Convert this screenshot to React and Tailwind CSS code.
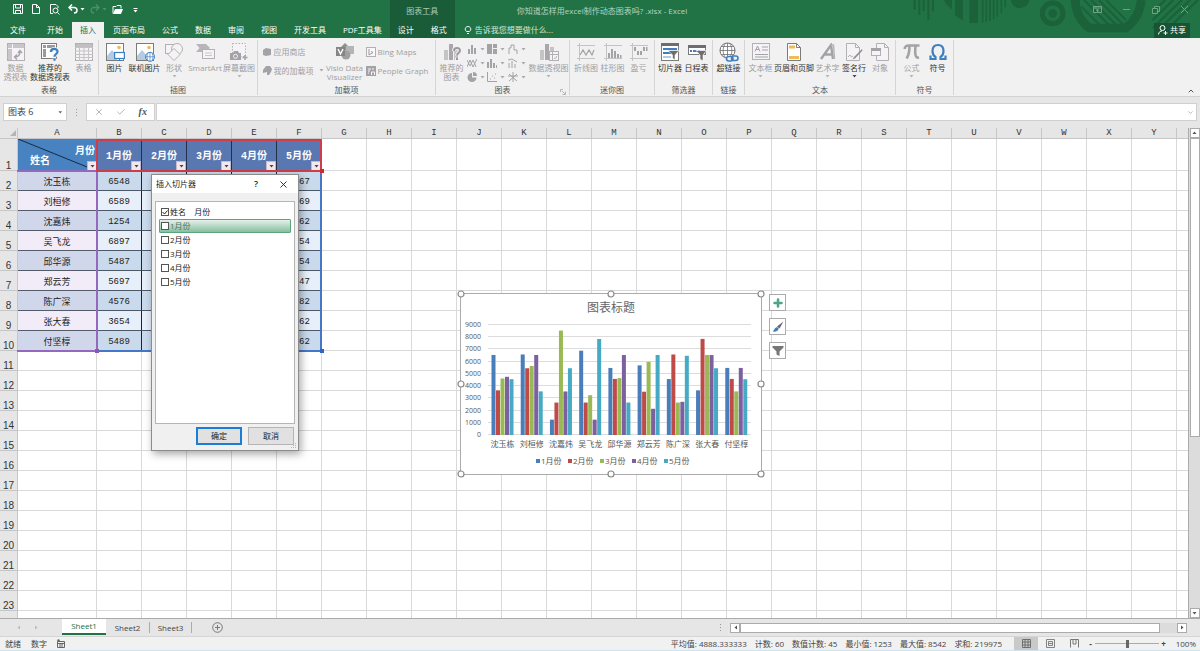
import { useState } from 'react';
import { Plus, X, Check, ChevronDown, ChevronUp } from 'lucide-react';

const months = ['1月份', '2月份', '3月份', '4月份', '5月份'];

const people = [
    { name: '沈玉栋', values: [6548, 3654, 4625, 4762, 4567] },
    { name: '刘桓修', values: [6589, 5462, 5647, 6547, 3569] },
    { name: '沈嘉炜', values: [1254, 2654, 8542, 3562, 5462] },
    { name: '吴飞龙', values: [6897, 2654, 3254, 1253, 7854] },
    { name: '邱华源', values: [5487, 4587, 4654, 6542, 2654] },
    { name: '郑云芳', values: [5697, 3541, 5987, 2145, 6547] },
    { name: '陈广深', values: [4576, 6587, 2654, 2715, 6482] },
    { name: '张大春', values: [3654, 7862, 6547, 6542, 5462] },
    { name: '付坚椁', values: [5489, 4587, 3568, 5487, 4562] },
];

const letters = 'ABCDEFGHIJKLMNOPQRSTUVWXY'.split('');
const seriesColors = ['#4a7ebb', '#be4b48', '#98b954', '#7d60a0', '#46aac5'];

const GREY = '#b3b0b4';
const DARK = '#6d6d6d';
const BLUE = '#3f7fbf';

function Icon({ children, size = 18, box = 18, ...rest }) {
    return (
        <svg width={size} height={size} viewBox={`0 0 ${box} ${box}`} fill="none" stroke={GREY} aria-hidden="true" {...rest}>
            {children}
        </svg>
    );
}

function Caret({ color = '#a8a8a8' }) {
    return (
        <svg width="5" height="3" viewBox="0 0 5 3" aria-hidden="true">
            <path d="M0.5 0h4L2.5 2.5z" fill={color} />
        </svg>
    );
}

const icons = {
    pivot: (
        <Icon>
            <rect x="0.5" y="0.5" width="17" height="17" fill="#f6f3f7" />
            <path d="M1 1h4v4H1zM6 1h11v4H6zM1 6h4v11H1z" fill="#c9c6ca" stroke="none" />
            <path d="M8 14c4 0 5-2 5-6M11 10l2-2.5 2 2.5M10 11.5L7.500 14l2.500 2.500" strokeWidth="1.400" stroke="#a5a2a7" />
        </Icon>
    ),
    pivotHelp: (
        <Icon>
            <rect x="0.5" y="0.5" width="15" height="15" fill="#fff" stroke="#7b7b7b" />
            <path d="M2 2h3v3H2zM6 2h8v3H6zM2 6h3v8H2z" fill="#9a9a9a" stroke="none" />
            <path d="M10 9c0-4 6.500-4 6.500-.3 0 2.500-3 2.300-3 5.300M13.500 15.500v2.500" stroke="#f1f1f1" strokeWidth="4" />
            <path d="M10 9c0-4 6.500-4 6.500-.3 0 2.300-3 2.300-3 5M13.500 15.500v2.300" stroke={BLUE} strokeWidth="2.200" />
        </Icon>
    ),
    table: (
        <Icon>
            <rect x="0.5" y="0.5" width="17" height="17" fill="#f6f3f7" />
            <path d="M1 1h16v3H1z" fill="#c2bfc3" stroke="none" />
            <path d="M0 4.500h18M0 8h18M0 11.500h18M0 14.500h18M4.500 4v14M9 4v14M13.500 4v14" stroke="#c6c3c7" />
        </Icon>
    ),
    picture: (
        <Icon size={20} box={20}>
            <rect x="1.500" y="1.500" width="17" height="17" fill="#fff" stroke="#7b7b7b" />
            <circle cx="14" cy="5.500" r="1.800" fill="#eebb55" stroke="none" />
            <path d="M2 18v-4l5-6 5 6v4z" fill="#b3cbe3" stroke="none" />
            <rect x="9.600" y="10.500" width="9.800" height="6" fill="#fff" stroke={BLUE} strokeWidth="1.200" />
            <path d="M12 18.500h5M14.500 17v1.500" stroke={BLUE} />
        </Icon>
    ),
    onlinePicture: (
        <Icon size={20} box={20}>
            <rect x="1.500" y="1.500" width="17" height="17" fill="#fff" stroke="#7b7b7b" />
            <circle cx="14" cy="5.500" r="1.800" fill="#eebb55" stroke="none" />
            <path d="M2 18v-4l5-6 5 6v4z" fill="#b3cbe3" stroke="none" />
            <circle cx="15" cy="14.800" r="4.500" fill="#fff" stroke={BLUE} />
            <path d="M10.500 14.800h9M15 10.500v9M13 11c-1.300 2-1.300 5.500 0 7.500M17 11c1.300 2 1.300 5.500 0 7.500" stroke={BLUE} strokeWidth="0.700" />
        </Icon>
    ),
    shapes: (
        <Icon>
            <rect x="0.5" y="1.500" width="10" height="9" fill="#f6f3f7" />
            <circle cx="12" cy="6" r="5.500" fill="#f6f3f7" />
            <path d="M9 5.500l6 6-6 6-6-6z" fill="#f6f3f7" />
        </Icon>
    ),
    smartArt: (
        <Icon size={20} box={20}>
            <path d="M1 2h10l4 4-4 4H1l3.500-4z" fill="#b8b5b9" stroke="none" />
            <rect x="7.500" y="7.500" width="12" height="9" fill="#f6f3f7" />
            <path d="M10 11h7M10 13.500h7" stroke="#c9c6ca" />
        </Icon>
    ),
    screenshot: (
        <Icon size={20} box={20}>
            <rect x="3.500" y="1.500" width="13" height="13" strokeDasharray="1.500 1.500" fill="#f6f3f7" />
            <path d="M1 11h3l1-2h4l1 2h2v7H1z" fill="#a5a2a7" stroke="none" />
            <circle cx="6.500" cy="14.300" r="2" stroke="#f1f1f1" />
            <path d="M16 13v5M13.500 15.500h5" strokeWidth="1.400" stroke="#a5a2a7" />
        </Icon>
    ),
    visio: (
        <Icon size={20} box={20}>
            <path d="M10 1l4 4-4 4-4-4z" fill="#8f8f8f" stroke="none" />
            <path d="M11 4h8v8h-8z" fill="#b5b5b5" stroke="none" />
            <circle cx="11" cy="13" r="4.500" fill="#a0a0a0" stroke="none" />
            <rect x="1" y="5" width="9" height="9" fill="#858585" stroke="none" />
            <path d="M3 7l2.500 5L8 7" stroke="#fff" strokeWidth="1.400" />
        </Icon>
    ),
    chartHelp: (
        <Icon size={20} box={20}>
            <path d="M2 8h4v10H2zM12 6h4v12h-4z" fill="#c6c3c7" stroke="none" />
            <path d="M7 2h4v16H7z" fill="#aaa7ab" stroke="none" />
            <path d="M12 9c0-4 6-4 6-.5 0 2.500-3 2.500-3 5M15 15.500v2.500" stroke="#f1f1f1" strokeWidth="4" />
            <path d="M12 9c0-4 6-4 6-.5 0 2.500-3 2.500-3 5M15 15.500v2.500" stroke="#9c999d" strokeWidth="2" />
        </Icon>
    ),
    pivotChart: (
        <Icon size={20} box={20}>
            <path d="M1 8h4v10H1zM11 5h4v8h-4z" fill="#c6c3c7" stroke="none" />
            <path d="M6 2h4v16H6z" fill="#aaa7ab" stroke="none" />
            <rect x="10.500" y="9.500" width="9" height="9" fill="#f6f3f7" />
            <path d="M10.500 12.500h9M13.500 9.500v9M15 16.500c2 0 2.500-1 2.500-2.500" />
        </Icon>
    ),
    sparkLine: (
        <Icon>
            <path d="M2.500 0v18M0 2.500h18M0 15.500h18" stroke="#c6c3c7" />
            <path d="M3 12l3-5 3 5 3-5 3 5 2-5" stroke="#a5a2a7" strokeWidth="1.200" />
        </Icon>
    ),
    sparkColumn: (
        <Icon>
            <path d="M2.500 0v18M0 2.500h18M0 15.500h18" stroke="#c6c3c7" />
            <path d="M4 10h2v5H4zM7 6h2v9H7zM10 8h2v7h-2zM13 11h2v4h-2zM16 12h1.500v3H16z" fill="#a5a2a7" stroke="none" />
        </Icon>
    ),
    winLoss: (
        <Icon>
            <path d="M2.500 0v18M0 2.500h18M0 15.500h18" stroke="#c6c3c7" />
            <path d="M4 4h2v4H4zM7 8h2v4H7zM10 8h2v4h-2zM13 4h2v4h-2zM16 4h1.500v4H16z" fill="#a5a2a7" stroke="none" />
        </Icon>
    ),
    slicer: (
        <Icon>
            <rect x="0.5" y="0.5" width="17" height="17" fill="#fff" stroke="#7b7b7b" />
            <path d="M0 0h18v3H0z" fill={DARK} stroke="none" />
            <path d="M2 5h14v2H2zM2 9h8v2H2z" fill={BLUE} stroke="none" />
            <path d="M2 13h8v2H2z" fill="#b3cbe3" stroke="none" />
            <path d="M7 7.500h11l-4 4.500v5l-2.500-2v-3z" fill={DARK} stroke="#fff" strokeWidth="0.600" />
        </Icon>
    ),
    timeline: (
        <Icon>
            <rect x="0.5" y="2.500" width="17" height="9" fill="#fff" stroke="#7b7b7b" />
            <path d="M0 2h18v3H0z" fill={DARK} stroke="none" />
            <path d="M2 8h2M5 8h4M10 8h2" stroke={BLUE} strokeWidth="2" />
            <path d="M8 7.500h10.500L15 12v6l-3-2v-4z" fill={DARK} stroke="#fff" strokeWidth="0.600" />
        </Icon>
    ),
    link: (
        <Icon size={20} box={20}>
            <circle cx="8.500" cy="8.500" r="7.500" fill="#fff" stroke={DARK} />
            <path d="M1 8.500h15M8.500 1v15M2.500 4.500h12M2.500 12.500h12M6 2c-2.500 4-2.500 9 0 13M11 2c2.500 4 2.500 9 0 13" stroke={DARK} strokeWidth="0.800" />
            <rect x="7.500" y="14.500" width="6.500" height="4.500" rx="2.200" fill="#f1f1f1" stroke={BLUE} strokeWidth="1.600" />
            <rect x="12.500" y="14" width="6.500" height="4.500" rx="2.200" stroke={BLUE} strokeWidth="1.600" />
        </Icon>
    ),
    textBox: (
        <Icon>
            <rect x="0.5" y="0.5" width="17" height="16" fill="#f6f3f7" />
            <path d="M3 8.500L5.500 3 8 8.500M4 6.500h3M10 4h6M10 7h6M3 11.500h13M3 14h13" stroke="#a5a2a7" />
        </Icon>
    ),
    headerFooter: (
        <Icon>
            <path d="M2.500 .5h9l4 4v13h-13z" fill="#fff" stroke="#7b7b7b" />
            <path d="M11.500 .5v4h4" stroke="#7b7b7b" />
            <path d="M4 2.500h6v3H4zM4 13h10v3H4z" fill="#eebb55" stroke="none" />
        </Icon>
    ),
    wordArt: (
        <Icon>
            <path d="M2 16L12 2l2 14M5.500 11.500H13" stroke="#a5a2a7" strokeWidth="2.400" />
            <path d="M12 2h2.500l1 14" stroke="#b8b5b9" strokeWidth="1.500" />
        </Icon>
    ),
    signature: (
        <Icon>
            <path d="M1.500 .5h9l4 4v13h-13z" fill="#f6f3f7" />
            <path d="M10.500 .5v4h4M3 14l2-2 1.500 2 1.500-1" />
            <path d="M17 6l-8 8-1.500 2.500L10 15.500l7.500-8z" fill="#8f8f8f" stroke="none" />
        </Icon>
    ),
    object: (
        <Icon>
            <path d="M5.500 .5h8l4 4v13h-12z" fill="#f6f3f7" />
            <path d="M13.500 .5v4h4" />
            <rect x="0.5" y="5.500" width="9" height="7" fill="#f6f3f7" />
            <path d="M0 5h10v3H0z" fill="#a5a2a7" stroke="none" />
        </Icon>
    ),
    pi: (
        <Icon>
            <path d="M1.500 6C2 3 3.500 2.500 5.500 2.500h11" strokeWidth="2.400" stroke="#a5a2a7" />
            <path d="M6.500 3c0 5-.5 9-3 12.500M12.500 3c-.5 6-1 12.500 3.500 11.500" strokeWidth="2.600" stroke="#a5a2a7" />
        </Icon>
    ),
    omega: (
        <Icon>
            <path d="M1.500 12.500v3.500h5v-2C4 12.500 3.500 10 3.500 8c0-3.500 2-6 5.500-6s5.500 2.500 5.500 6c0 2-.5 4.500-3 6v2h5v-3.500" strokeWidth="2.200" stroke={BLUE} />
        </Icon>
    ),
};

function Tool({ icon, lines, width, active, caret }) {
    return (
        <button disabled={!active} className={`${width} flex flex-col items-center shrink-0 leading-[9px] whitespace-nowrap ${active ? 'text-[#333]' : 'text-[#a09da1]'}`}>
            <span className="h-[20px] mb-px flex items-center justify-center">{icons[icon]}</span>
            {lines.map((line) => (
                <span key={line}>{line}</span>
            ))}
            {caret && (
                <span className="h-[9px] flex items-center">
                    <Caret color={active ? '#444' : '#b5b5b5'} />
                </span>
            )}
        </button>
    );
}

function Group({ label, width, children, launcher }) {
    return (
        <section aria-label={label} className={`${width} relative shrink-0 flex flex-col pt-[2px] mt-[2px] mb-px border-r border-[#d5d5d5]`}>
            <div className="flex flex-1 min-h-0 justify-center">{children}</div>
            <div className="h-[10px] shrink-0 leading-[10px] text-center text-[#555]">{label}</div>
            {launcher && (
                <svg className="absolute right-[3px] bottom-0" width="6" height="6" viewBox="0 0 6 6" fill="none" stroke="#aaa" aria-hidden="true">
                    <path d="M.5 3V.5H3M2 2l3 3M5.500 2.500v3h-3" strokeWidth="0.800" />
                </svg>
            )}
        </section>
    );
}

function SmallTool({ label, children, caret }) {
    return (
        <button disabled className="h-[19px] flex items-center gap-[2px] whitespace-nowrap text-[#a09da1]">
            {children}
            <span>{label}</span>
            {caret && <span className="pl-[3px]"><Caret /></span>}
        </button>
    );
}

const miniCharts = [
    ['柱形图', 'M1 5h2v5H1zM4 1h2v9H4zM7 4h2v6H7z', true],
    ['层次结构', 'M0 0h5v10H0zM6 0h4v4H6zM6 5h4v5H6z', true],
    ['瀑布图', 'M1 10V4h2V1h3v5h3v4', false],
    ['折线图', 'M0 9l3-7 3 7 4-8M0 2l3 6 3-6 3 7', false],
    ['统计图', 'M0 4h2v6H0zM3 1h2v9H3zM6 5h2v5H6zM9 7h1v3H9z', true],
    ['组合图', 'M1 10V5M4 10V3M7 10V6M0 2l4-1 5 3', false],
    ['饼图', 'M5 1a4.500 4.500 0 1 0 4.500 4.500H5zM6 0v4h4a4 4 0 0 0-4-4z', true],
    ['散点图', 'M.5 0v9.500H10M3 7h1M5 4h1M7 6h1M8 2h1', false],
    ['雷达图', 'M5 0v10M0 4h10M1 9l8-7M9 9L1 2', false],
];

function Ribbon() {
    return (
        <div className="h-[59px] shrink-0 flex overflow-hidden bg-[#f1f1f1] border-b border-[#d2d2d2]">
            <Group label="表格" width="w-[99px]">
                <Tool icon="pivot" lines={['数据', '透视表']} width="w-[30px]" />
                <Tool icon="pivotHelp" lines={['推荐的', '数据透视表']} width="w-[39px]" active />
                <Tool icon="table" lines={['表格']} width="w-[28px]" />
            </Group>
            <Group label="插图" width="w-[159px]">
                <Tool icon="picture" lines={['图片']} width="w-[29px]" active />
                <Tool icon="onlinePicture" lines={['联机图片']} width="w-[31px]" active />
                <Tool icon="shapes" lines={['形状']} width="w-[28px]" caret />
                <Tool icon="smartArt" lines={['SmartArt']} width="w-[34px]" />
                <Tool icon="screenshot" lines={['屏幕截图']} width="w-[34px]" caret />
            </Group>
            <Group label="加载项" width="w-[178px]">
                <div className="w-[61px] flex flex-col">
                    <SmallTool label="应用商店">
                        <Icon size={9} box={9}>
                            <path d="M0 3l3-2 5 1v6l-5 1-3-1z" fill="#a5a2a7" stroke="none" />
                        </Icon>
                    </SmallTool>
                    <SmallTool label="我的加载项" caret>
                        <Icon size={9} box={9}>
                            <path d="M3 0h4l2 3-1 3-2 3H4V6L0 7V4z" fill="#a5a2a7" stroke="none" />
                        </Icon>
                    </SmallTool>
                </div>
                <Tool icon="visio" lines={['Visio Data', 'Visualizer']} width="w-[42px]" />
                <div className="w-[65px] flex flex-col">
                    <SmallTool label="Bing Maps">
                        <Icon size={10} box={10}>
                            <rect x="0.5" y="0.5" width="9" height="9" fill="#f8f8f8" />
                            <path d="M3 2v6l4-2.500-2-1" stroke="#9c999d" />
                        </Icon>
                    </SmallTool>
                    <SmallTool label="People Graph">
                        <Icon size={10} box={10}>
                            <rect width="10" height="10" fill="#a5a2a7" stroke="none" />
                            <path d="M2 3h3M2 5h2M2 7h1M7 2v2M5.500 9V6h3v3" stroke="#f5f5f5" />
                        </Icon>
                    </SmallTool>
                </div>
            </Group>
            <Group label="图表" width="w-[134px]" launcher>
                <Tool icon="chartHelp" lines={['推荐的', '图表']} width="w-[30px]" />
                <div className="w-[62px] grid grid-cols-3 content-start">
                    {miniCharts.map(([name, d, filled]) => (
                        <button key={name} disabled aria-label={name} className="h-[14px] flex items-center gap-[3px]">
                            <svg width="10" height="10" viewBox="0 0 10 10" fill={filled ? '#a5a2a7' : 'none'} stroke={filled ? 'none' : '#a5a2a7'} aria-hidden="true">
                                <path d={d} />
                            </svg>
                            <Caret />
                        </button>
                    ))}
                </div>
                <Tool icon="pivotChart" lines={['数据透视图']} width="w-[40px]" caret />
            </Group>
            <Group label="迷你图" width="w-[85px]">
                <Tool icon="sparkLine" lines={['折线图']} width="w-[27px]" />
                <Tool icon="sparkColumn" lines={['柱形图']} width="w-[26px]" />
                <Tool icon="winLoss" lines={['盈亏']} width="w-[26px]" />
            </Group>
            <Group label="筛选器" width="w-[58px]">
                <Tool icon="slicer" lines={['切片器']} width="w-[26px]" active />
                <Tool icon="timeline" lines={['日程表']} width="w-[27px]" active />
            </Group>
            <Group label="链接" width="w-[32px]">
                <Tool icon="link" lines={['超链接']} width="w-[28px]" active />
            </Group>
            <Group label="文本" width="w-[151px]">
                <Tool icon="textBox" lines={['文本框']} width="w-[26px]" caret />
                <Tool icon="headerFooter" lines={['页眉和页脚']} width="w-[41px]" active />
                <Tool icon="wordArt" lines={['艺术字']} width="w-[26px]" caret />
                <Tool icon="signature" lines={['签名行']} width="w-[27px]" active caret />
                <Tool icon="object" lines={['对象']} width="w-[25px]" />
            </Group>
            <Group label="符号" width="w-[58px]">
                <Tool icon="pi" lines={['公式']} width="w-[26px]" caret />
                <Tool icon="omega" lines={['符号']} width="w-[26px]" active />
            </Group>
            <button aria-label="折叠功能区" className="ml-auto self-end mr-[5px] mb-px text-[#555]">
                <ChevronUp size={8} strokeWidth={3} />
            </button>
        </div>
    );
}

function Tab({ children, active }) {
    return (
        <button className={`h-[16px] px-2 whitespace-nowrap ${active ? 'bg-[#f1f1f1] text-[#217346]' : 'text-white'}`}>{children}</button>
    );
}

function TitleArt() {
    return (
        <svg className="absolute right-0 top-0" width="340" height="38" viewBox="0 0 1020 114" fill="none" stroke="#1b613a" aria-hidden="true">
            <path d="M164 0v30M178 0v45M191 0v34M205 0v60M219 0v34" strokeWidth="6" />
            <path d="M252 0h24v28C264 20 256 10 252 0zM285 0h24v62l-24-16zM328 0h26v70l-26-2z" fill="#1b613a" stroke="none" />
            <path d="M368 0v68M379 0v66M390 0v63M401 0v58M412 0v50M424 0v40M436 0v22" strokeWidth="5" />
            <circle cx="480" cy="-4" r="28" fill="#1b613a" stroke="none" />
            <circle cx="578" cy="40" r="31" strokeWidth="15" />
            <circle cx="578" cy="40" r="13" fill="#1b613a" stroke="none" />
            <path d="M646 0c0 34 14 62 42 84h108c28-18 44-50 48-84" strokeWidth="26" />
            <path d="M672 0l84 84M694 0l82 82M716 0l72 72M738 0l60 60M664 20l64 64" strokeWidth="6" />
            <path d="M878 84L966 0M900 84L990 0M878 60L940 0M878 36L916 0M926 84L1014 0" strokeWidth="7" />
        </svg>
    );
}

function Header() {
    return (
        <header className="relative h-[38px] shrink-0 flex bg-[#217346] text-white">
            <TitleArt />
            <div className="flex flex-col shrink-0">
                <div className="h-[22px] pb-1 flex items-center">
                    <button aria-label="保存" className="ml-[13px]">
                        <Icon size={10} box={10} stroke="#fff"><path d="M.5 .5h9v9h-9zM2.500 1v3h5V1M2.500 9.500V6.500h5v3" /></Icon>
                    </button>
                    <button aria-label="新建" className="ml-[8px]">
                        <Icon size={10} box={10} stroke="#fff"><path d="M1.500 .5h4l3 3v6h-7zM5.500 .5v3h3" /></Icon>
                    </button>
                    <button aria-label="打印预览" className="ml-[8px]">
                        <Icon size={11} box={11} stroke="#fff"><path d="M4 9.500H1.500v-9H7l2 2V4M8.500 8.500l2 2" /><circle cx="6.500" cy="6.500" r="2.500" /></Icon>
                    </button>
                    <button aria-label="撤消" className="ml-[8px] flex items-center gap-[2px]">
                        <Icon size={10} box={10} stroke="#fff"><path d="M4 .5L1 3.500l3 3M1 3.500h5c4 0 4 5.500 0 5.500" strokeWidth="1.500" /></Icon>
                        <Caret color="#fff" />
                    </button>
                    <button aria-label="恢复" disabled className="ml-[5px] flex items-center gap-[2px]">
                        <Icon size={10} box={10} stroke="#4b9069"><path d="M6 .5l3 3-3 3M9 3.500H4c-4 0-4 5.500 0 5.500" strokeWidth="1.300" /></Icon>
                        <Caret color="#4b9069" />
                    </button>
                    <button aria-label="打开" className="ml-[5px]">
                        <Icon size={11} box={11} stroke="#fff"><path d="M1 9.500v-7h3l1-1h4v3" /><path d="M1 10l2-5h8l-2 5z" fill="#fff" stroke="none" /></Icon>
                    </button>
                    <button aria-label="自定义快速访问工具栏" className="ml-[10px] pt-[2px]">
                        <Icon size={5} box={5} stroke="#fff"><path d="M.5 .5h4" /><path d="M.5 2h4L2.500 4.500z" fill="#fff" stroke="none" /></Icon>
                    </button>
                </div>
                <nav className="flex gap-px">
                    <button className="h-[16px] w-[38px] pr-[2px] text-center">文件</button>
                    <Tab>开始</Tab>
                    <Tab active>插入</Tab>
                    <Tab>页面布局</Tab>
                    <Tab>公式</Tab>
                    <Tab>数据</Tab>
                    <Tab>审阅</Tab>
                    <Tab>视图</Tab>
                    <Tab>开发工具</Tab>
                    <Tab>PDF工具集</Tab>
                </nav>
            </div>
            <div className="w-[65px] shrink-0 flex flex-col bg-[#1b5c38]">
                <div className="h-[22px] leading-[22px] text-center text-[#a9cbb7]">图表工具</div>
                <div className="flex justify-between">
                    <Tab>设计</Tab>
                    <Tab>格式</Tab>
                </div>
            </div>
            <div className="relative flex-1 flex flex-col min-w-0">
                <div className="h-[22px] flex items-center pl-[62px] pr-[11px]">
                    <h1 className="text-[#b5d3c1] whitespace-nowrap">你知道怎样用excel制作动态图表吗? .xlsx - Excel</h1>
                    <div className="ml-auto flex gap-[20px] pb-[3px]">
                        <button aria-label="功能区显示选项"><Icon size={9} box={9} stroke="#6ea486"><path d="M.5 1.500h8v6h-8zM.5 3h8M4.500 7V4.500M3 5.500l1.500-1 1.500 1" /></Icon></button>
                        <button aria-label="最小化"><Icon size={9} box={9} stroke="#6ea486"><path d="M1 4.500h7" /></Icon></button>
                        <button aria-label="还原"><Icon size={9} box={9} stroke="#6ea486"><path d="M1.500 3.500h5v5h-5zM3.500 3V1.500h5v5H7" /></Icon></button>
                        <button aria-label="关闭"><Icon size={9} box={9} stroke="#6ea486"><path d="M1 1l7 7M8 1L1 8" /></Icon></button>
                    </div>
                </div>
                <div className="h-[16px] flex items-center pl-[9px] pr-[10px]">
                    <button className="flex items-center gap-[3px] text-[#d5e6db] whitespace-nowrap">
                        <Icon size={8} box={8} stroke="#fff"><path d="M2.500 5.500C0 3.500 1.500 .5 4 .5s4 3 1.500 5M2.500 5.500h3M3 7.500h2" /></Icon>
                        告诉我您想要做什么...
                    </button>
                    <button className="ml-auto h-[15px] w-[36px] flex items-center justify-center gap-[2px] bg-[#175433]">
                        <Icon size={10} box={10} stroke="#fff"><circle cx="4.500" cy="3" r="2.500" /><path d="M.5 9.500C1 6.500 2.500 6 4 6M5.500 8h4M7.500 6v4" /></Icon>
                        共享
                    </button>
                </div>
            </div>
        </header>
    );
}

function FormulaBar() {
    return (
        <div className="h-[31px] shrink-0 flex items-center pl-[3px] pr-[3px] pb-px bg-[#e6e6e6]">
            <div className="h-[18px] w-[64px] flex items-center bg-white border border-[#cfcfcf] pr-[3px]">
                <input aria-label="名称框" defaultValue="图表 6" className="w-full min-w-0 pl-[4px] text-[9px] text-[#444] outline-none" />
                <Caret color="#666" />
            </div>
            <div className="w-[19px] flex flex-col items-center gap-[2px]">
                <i className="size-px bg-[#999]" /><i className="size-px bg-[#999]" /><i className="size-px bg-[#999]" />
            </div>
            <div className="h-[18px] w-[69px] flex items-center justify-around px-[1px] bg-white border border-[#cfcfcf] text-[#a5a5a5]">
                <button aria-label="取消输入"><X size={10} /></button>
                <button aria-label="输入"><Check size={10} /></button>
                <button aria-label="插入函数" className="font-['Liberation_Serif',serif] italic font-bold text-[10px] text-[#555]">fx</button>
            </div>
            <div className="h-[18px] ml-[1px] flex-1 flex items-center bg-white border border-[#cfcfcf] pr-[2px]">
                <input aria-label="编辑栏" className="flex-1 min-w-0 px-1 outline-none" />
                <ChevronDown size={7} className="text-[#888]" />
            </div>
        </div>
    );
}

function FilterButton({ label }) {
    return (
        <button aria-label={`筛选 ${label}`} className="absolute right-0 bottom-0 size-[10px] flex items-center justify-center bg-[#f3e8ee] border border-[#c9b9c6]">
            <Caret color="#444" />
        </button>
    );
}

function SheetTable() {
    const rows = Array.from({ length: 23 }, (_, i) => i + 2);
    const rest = letters.slice(6);
    return (
        <table className="w-full min-w-[1187px] table-fixed border-separate border-spacing-0 text-center">
            <colgroup>
                <col className="w-[18px]" />
                <col className="w-[79px]" />
                {letters.slice(1).map((l) => <col key={l} className="w-[45px]" />)}
                <col />
            </colgroup>
            <thead>
                <tr className="h-[11px] bg-[#e6e6e6] font-['Liberation_Mono',monospace] text-[9px] leading-[9px] text-[#333]">
                    <td className="p-0 border-b border-r border-[#c6c6c6]">
                        <svg className="ml-auto" width="8" height="8" viewBox="0 0 8 8" aria-hidden="true"><path d="M7 1v6H1z" fill="#b5b5b5" /></svg>
                    </td>
                    {letters.map((l) => (
                        <th key={l} scope="col" className="p-0 pt-px font-normal border-b border-r border-[#c6c6c6]">{l}</th>
                    ))}
                    <td className="p-0 border-b border-[#c6c6c6]" />
                </tr>
            </thead>
            <tbody>
                <tr className="h-[32px] font-['Liberation_Mono','Noto_Sans_CJK_SC',monospace] text-[10px] text-white font-bold">
                    <th scope="row" className="p-0 align-bottom bg-[#e6e6e6] border-b border-r border-[#c6c6c6] font-['Liberation_Sans',sans-serif] font-normal leading-[8px] text-[#333]">1</th>
                    <td className="p-0 relative bg-[#4882c0]">
                        <svg className="absolute inset-0 size-full" viewBox="0 0 79 32" preserveAspectRatio="none" aria-hidden="true">
                            <path d="M0 0l79 32" stroke="#1b2a40" />
                        </svg>
                        <div className="relative h-[32px] pt-[4px] flex flex-col justify-center leading-[10px]">
                            <span className="pr-[2px] text-right">月份</span>
                            <span className="pl-[12px] text-left">姓名</span>
                        </div>
                        <FilterButton label="姓名" />
                    </td>
                    {months.map((m) => (
                        <td key={m} className="p-0 pt-[4px] relative bg-[#5978b1] border-r border-[#22304a]">
                            {m}
                            <FilterButton label={m} />
                        </td>
                    ))}
                    {rest.map((l) => <td key={l} className="p-0 border-b border-r border-[#d9d9d9]" />)}
                    <td className="p-0 border-b border-[#d9d9d9]" />
                </tr>
                {rows.map((n) => {
                    const person = people[n - 2];
                    const even = n % 2 === 0;
                    return (
                        <tr key={n} className="h-[20px]">
                            <th scope="row" className="p-0 h-[20px] align-bottom bg-[#e6e6e6] border-b border-r border-[#c6c6c6] font-['Liberation_Sans',sans-serif] font-normal text-[10px] leading-[8px] text-[#333]">{n < 24 && n}</th>
                            {person ? (
                                <>
                                    <td className={`p-0 pt-[2px] text-[9px] leading-[10px] text-[#222] border-b border-r border-b-[#555b68] border-r-[#8a62b8] ${even ? 'bg-[#d1d7eb]' : 'bg-[#f1ecf7]'}`}>{person.name}</td>
                                    {person.values.map((v, i) => (
                                        <td key={months[i]} className={`p-0 pt-[2px] font-['Liberation_Mono',monospace] text-[9px] leading-[10px] text-[#222] border-b border-r border-b-[#4d5968] border-r-[#1c2430] ${even ? 'bg-[#c9daec]' : 'bg-[#e7effa]'}`}>{v}</td>
                                    ))}
                                </>
                            ) : (
                                letters.slice(0, 6).map((l) => <td key={l} className="p-0 border-b border-r border-[#d9d9d9]" />)
                            )}
                            {rest.map((l) => <td key={l} className="p-0 border-b border-r border-[#d9d9d9]" />)}
                            <td className="p-0 border-b border-[#d9d9d9]" />
                        </tr>
                    );
                })}
            </tbody>
        </table>
    );
}

function Bars() {
    const left = 27;
    const bottom = 141;
    const plotW = 263;
    const plotH = 110;
    const step = plotW / people.length;
    return (
        <svg width="300" height="180" viewBox="0 0 300 180" role="img" aria-label="图表标题" fontSize="7" fill="#555">
            <text x="150" y="18" textAnchor="middle" fontSize="12" fill="#666">图表标题</text>
            {Array.from({ length: 10 }, (_, i) => {
                const y = Math.round(bottom - (plotH * i) / 9);
                return (
                    <g key={i}>
                        <path d={`M${left} ${y - 0.5}h${plotW}`} stroke="#dcdcdc" />
                        <text x="20" y={y + 2} textAnchor="end">{i * 1000}</text>
                    </g>
                );
            })}
            {people.map((p, g) => (
                <g key={p.name}>
                    {p.values.map((v, i) => {
                        const h = (v / 9000) * plotH;
                        return <rect key={i} x={left + 3.500 + g * step + i * 4.500} y={bottom - h} width="4" height={h} fill={seriesColors[i]} />;
                    })}
                    <text x={left + (g + 0.5) * step} y="153" textAnchor="middle" fontSize="8">{p.name}</text>
                </g>
            ))}
            {months.map((m, i) => (
                <g key={m}>
                    <rect x={75 + i * 32} y="165" width="4" height="4" fill={seriesColors[i]} />
                    <text x={80 + i * 32} y="170" fontSize="8">{m}</text>
                </g>
            ))}
        </svg>
    );
}

const handles = [[0, 0], [150, 0], [300, 0], [0, 90], [300, 90], [0, 180], [150, 180], [300, 180]];

function ChartObject() {
    return (
        <div className="absolute left-[461px] top-[166px] flex items-start gap-[8px]">
            <div className="relative bg-white outline outline-[#ababab]">
                <Bars />
                <svg className="absolute inset-0 overflow-visible" width="300" height="180" viewBox="0 0 300 180" aria-hidden="true">
                    {handles.map(([x, y]) => (
                        <circle key={`${x}-${y}`} cx={x} cy={y} r="3" fill="#fff" stroke="#8a8a8a" strokeWidth="1.200" />
                    ))}
                </svg>
            </div>
            <div className="flex flex-col gap-[7px]">
                <button aria-label="图表元素" className="size-[17px] flex items-center justify-center bg-white border border-[#ababab] text-[#4fa583]">
                    <Plus size={12} strokeWidth={5} />
                </button>
                <button aria-label="图表样式" className="size-[17px] flex items-center justify-center bg-white border border-[#ababab]">
                    <Icon size={12} box={12} stroke="none">
                        <path d="M11.500 .5L7.500 7.500 5 5.500z" fill="#666" />
                        <path d="M5 6l1.700 1.500C6.500 10 4 11 .5 10.500 2.500 9.500 2 7 5 6z" fill={BLUE} />
                    </Icon>
                </button>
                <button aria-label="图表筛选器" className="size-[17px] flex items-center justify-center bg-white border border-[#ababab]">
                    <Icon size={12} box={12} stroke="none">
                        <path d="M.5 1h11v1.500L7.500 6.500V11L4.500 9.500v-3L.5 2.500z" fill="#777" />
                    </Icon>
                </button>
            </div>
        </div>
    );
}

function SlicerDialog() {
    const [checked, setChecked] = useState(['姓名    月份']);
    const fields = ['姓名    月份', ...months];
    const toggle = (f) => setChecked(checked.includes(f) ? checked.filter((c) => c !== f) : [...checked, f]);

    return (
        <div role="dialog" aria-label="插入切片器" className="absolute left-[151px] top-[46px] w-[148px] h-[277px] flex flex-col bg-[#f0f0f0] border border-[#8c8c8c] shadow-[2px_3px_8px_rgba(0,0,0,0.35)] text-[#222]">
            <div className="h-[18px] shrink-0 flex items-center bg-white pl-[4px] pr-[9px]">
                <h2 className="mr-auto">插入切片器</h2>
                <button aria-label="帮助" className="mr-[20px] text-[9px] font-semibold">?</button>
                <button aria-label="关闭"><X size={11} /></button>
            </div>
            <div className="flex-1 mt-[8px] mx-[3px] pt-[3px] px-[3px] bg-white border border-[#b5b5b5]">
                {fields.map((f) => (
                    <label key={f} className={`h-[14px] px-px flex items-center border rounded-[1px] whitespace-pre ${f === '1月份' ? 'border-[#5aa57c] bg-linear-to-b from-[#e4f1ea] to-[#86bfa0] text-[#55705f]' : 'border-transparent'}`}>
                        <span className="relative size-[8px] mr-px">
                            <input type="checkbox" checked={checked.includes(f)} onChange={() => toggle(f)} className="peer block appearance-none size-[8px] bg-white border border-[#555]" />
                            <svg className="absolute inset-0 hidden peer-checked:block pointer-events-none" width="8" height="8" viewBox="0 0 8 8" fill="none" stroke="#222" aria-hidden="true">
                                <path d="M1.500 4l2 2L6.500 2.500" />
                            </svg>
                        </span>
                        {f}
                    </label>
                ))}
            </div>
            <div className="h-[26px] shrink-0 flex justify-end items-start gap-[6px] pt-[3px] pr-[4px]">
                <button className="h-[18px] w-[46px] bg-[#e1e1e1] border-2 border-[#1b7ed6]">确定</button>
                <button className="h-[18px] w-[46px] bg-[#e1e1e1] border border-[#b5b5b5]">取消</button>
            </div>
            <svg className="absolute right-px bottom-px" width="6" height="6" viewBox="0 0 6 6" fill="#b5b5b5" aria-hidden="true">
                <path d="M4 0h1v1H4zM4 2h1v1H4zM2 2h1v1H2zM4 4h1v1H4zM2 4h1v1H2zM0 4h1v1H0z" />
            </svg>
        </div>
    );
}

function Grid() {
    return (
        <main className="flex-1 min-h-0 flex">
            <div className="relative flex-1 min-w-0 overflow-hidden bg-white border-r border-[#ababab]">
                <SheetTable />
                {/* coloured ranges that feed the chart */}
                <div className="absolute left-[17px] top-[42px] w-[81px] h-[182px] border-2 border-[#9368bd] border-l-0" />
                <div className="absolute left-[96px] top-[42px] w-[226px] h-[182px] border-2 border-[#4577c9] border-t-0 border-l-0" />
                <div className="absolute left-[96px] top-[11px] w-[226px] h-[33px] border-2 border-[#cf3d48]" />
                <i className="absolute left-[95px] top-[221px] size-[4px] bg-[#8657b5]" />
                <i className="absolute left-[320px] top-[221px] size-[4px] bg-[#2f66c4]" />
                <i className="absolute left-[320px] top-[41px] size-[4px] bg-[#c92a36]" />
                <ChartObject />
                <SlicerDialog />
            </div>
            <div className="w-[11px] shrink-0 flex flex-col items-center bg-[#dcdcdc]">
                <button aria-label="向上滚动" className="size-[10px] shrink-0 flex items-center justify-center bg-white border border-[#ababab] rotate-180"><Caret color="#555" /></button>
                <div className="w-[10px] h-[61%] bg-white border border-[#ababab]" />
                <button aria-label="向下滚动" className="mt-auto size-[10px] shrink-0 flex items-center justify-center bg-white border border-[#ababab]"><Caret color="#555" /></button>
            </div>
        </main>
    );
}

function SheetTabs() {
    return (
        <div className="h-[18px] shrink-0 flex bg-[#e6e6e6] border-t border-[#ababab] text-[#444]">
            <div className="w-[62px] flex items-center justify-center gap-[13px] pr-[8px]">
                <button aria-label="上一个工作表" disabled className="rotate-90"><Caret color="#bbb" /></button>
                <button aria-label="下一个工作表" disabled className="-rotate-90"><Caret color="#bbb" /></button>
            </div>
            <button className="h-[16px] w-[44px] bg-white border-b-2 border-[#217346] text-[#217346]">Sheet1</button>
            <button className="my-[3px] w-[44px] border-r border-[#ababab]">Sheet2</button>
            <button className="my-[3px] w-[42px] border-r border-[#ababab]">Sheet3</button>
            <button aria-label="新工作表" className="ml-[20px]">
                <Icon size={11} box={11} stroke="#777"><circle cx="5.500" cy="5.500" r="4.800" /><path d="M3 5.500h5M5.500 3v5" /></Icon>
            </button>
            <div className="ml-auto mr-[13px] w-[467px] flex items-center">
                <div className="w-[10px] flex flex-col gap-[2px]">
                    <i className="size-px bg-[#999]" /><i className="size-px bg-[#999]" /><i className="size-px bg-[#999]" />
                </div>
                <button aria-label="向左滚动" className="size-[10px] flex items-center justify-center bg-white border border-[#ababab]"><span className="rotate-90"><Caret color="#555" /></span></button>
                <div className="h-[10px] flex-1 flex bg-[#dcdcdc]">
                    <div className="w-[96%] bg-white border border-[#ababab]" />
                </div>
                <button aria-label="向右滚动" className="size-[10px] flex items-center justify-center bg-white border border-[#ababab]"><span className="-rotate-90"><Caret color="#555" /></span></button>
            </div>
        </div>
    );
}

const stats = ['平均值: 4888.333333', '计数: 60', '数值计数: 45', '最小值: 1253', '最大值: 8542', '求和: 219975'];

function StatusBar() {
    return (
        <footer className="h-[15px] shrink-0 flex items-center bg-[#f1f1f1] border-t border-t-[#d5d5d5] border-b border-b-[#cfe3ef] pl-[5px] pr-[4px] text-[#444] whitespace-nowrap">
            <span>就绪</span>
            <span className="ml-[10px]">数字</span>
            <button aria-label="录制宏" className="ml-[10px]">
                <Icon size={9} box={9} stroke="#666"><path d="M.5 2.500h7v6h-7zM.5 4.500h7M3 4v4M5 4v4" /><circle cx="1.500" cy="1.500" r="1.200" fill="#666" stroke="none" /></Icon>
            </button>
            <div className="ml-auto flex gap-[8px]">
                {stats.map((s) => <span key={s}>{s}</span>)}
            </div>
            <div className="ml-[12px] flex items-center self-stretch">
                <button aria-label="普通" className="h-full w-[24px] flex items-center justify-center bg-[#c9c9c9]">
                    <Icon size={9} box={9} stroke="#666"><path d="M.5 .5h8v8h-8zM3 0v9M6 0v9M0 3h9M0 6h9" strokeWidth="0.900" /></Icon>
                </button>
                <button aria-label="页面布局" className="h-full w-[24px] flex items-center justify-center">
                    <Icon size={9} box={9} stroke="#777"><path d="M.5 .5h8v8h-8zM2.500 2.500h4v4h-4zM3 4.500h3" strokeWidth="0.900" /></Icon>
                </button>
                <button aria-label="分页预览" className="h-full w-[24px] flex items-center justify-center">
                    <Icon size={9} box={9} stroke="#777"><path d="M.5 8.500v-8h8v8M3 0v5h3V0" /></Icon>
                </button>
            </div>
            <button aria-label="缩小" className="w-[9px] font-bold">-</button>
            <input
                type="range"
                aria-label="显示比例"
                defaultValue="50"
                className="w-[64px] h-[9px] appearance-none bg-[linear-gradient(#aaa,#aaa)] bg-[length:100%_1px] bg-center bg-no-repeat [&::-webkit-slider-thumb]:appearance-none [&::-webkit-slider-thumb]:w-[3px] [&::-webkit-slider-thumb]:h-[8px] [&::-webkit-slider-thumb]:bg-[#666]"
            />
            <button aria-label="放大" className="w-[9px] font-bold">+</button>
            <span className="w-[28px] text-right">100%</span>
        </footer>
    );
}

export default function App() {
    return (
        <div className="h-screen flex flex-col overflow-hidden bg-[#e6e6e6] font-['Open_Sans','Noto_Sans_CJK_SC',sans-serif] text-[8px] leading-[10px]">
            <Header />
            <Ribbon />
            <FormulaBar />
            <Grid />
            <SheetTabs />
            <StatusBar />
        </div>
    );
}
